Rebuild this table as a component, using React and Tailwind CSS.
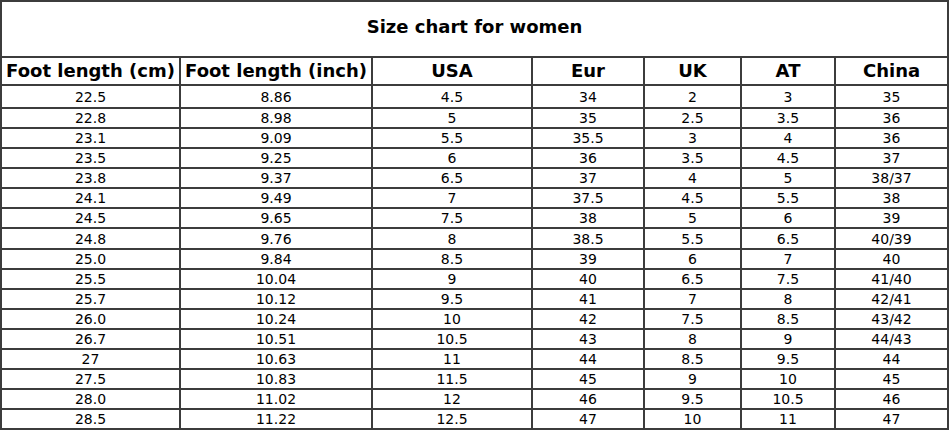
const columns = [
  { label: "Foot length (cm)", width: "w-[179px]" },
  { label: "Foot length (inch)", width: "w-[192px]" },
  { label: "USA", width: "w-[160px]" },
  { label: "Eur", width: "w-[112px]" },
  { label: "UK", width: "w-[97px]" },
  { label: "AT", width: "w-[94px]" },
  { label: "China", width: "w-[113px]" },
];

const rows = [
  ["22.5", "8.86", "4.5", "34", "2", "3", "35"],
  ["22.8", "8.98", "5", "35", "2.5", "3.5", "36"],
  ["23.1", "9.09", "5.5", "35.5", "3", "4", "36"],
  ["23.5", "9.25", "6", "36", "3.5", "4.5", "37"],
  ["23.8", "9.37", "6.5", "37", "4", "5", "38/37"],
  ["24.1", "9.49", "7", "37.5", "4.5", "5.5", "38"],
  ["24.5", "9.65", "7.5", "38", "5", "6", "39"],
  ["24.8", "9.76", "8", "38.5", "5.5", "6.5", "40/39"],
  ["25.0", "9.84", "8.5", "39", "6", "7", "40"],
  ["25.5", "10.04", "9", "40", "6.5", "7.5", "41/40"],
  ["25.7", "10.12", "9.5", "41", "7", "8", "42/41"],
  ["26.0", "10.24", "10", "42", "7.5", "8.5", "43/42"],
  ["26.7", "10.51", "10.5", "43", "8", "9", "44/43"],
  ["27", "10.63", "11", "44", "8.5", "9.5", "44"],
  ["27.5", "10.83", "11.5", "45", "9", "10", "45"],
  ["28.0", "11.02", "12", "46", "9.5", "10.5", "46"],
  ["28.5", "11.22", "12.5", "47", "10", "11", "47"],
];

export default function App() {
  return (
    <div className="w-[949px] h-[431px] bg-white overflow-hidden font-['DejaVu_Sans',Verdana,sans-serif] text-black">
      <table className="w-[947px] table-fixed border-collapse border-2 border-[#3c3c3c]">
        <colgroup>
          {columns.map((c) => (
            <col key={c.label} className={c.width} />
          ))}
        </colgroup>
        <tbody>
          {/* Title */}
          <tr className="h-[56px]">
            <td colSpan={7} className="border-2 border-[#3c3c3c] text-center align-middle text-[18px] font-bold pb-[5px]">
              Size chart for women
            </td>
          </tr>

          {/* Column headers */}
          <tr className="h-[28px]">
            {columns.map((c) => (
              <td
                key={c.label}
                className="border-2 border-[#3c3c3c] text-center align-middle text-[18px] font-bold leading-none whitespace-nowrap px-0 pb-[1px]"
              >
                {c.label}
              </td>
            ))}
          </tr>

          {/* Sizes */}
          {rows.map((r, i) => (
            <tr key={i} className={i === 0 ? "h-[23px]" : "h-[20.08px]"}>
              {r.map((v, j) => (
                <td
                  key={j}
                  className="border-2 border-[#3c3c3c] text-center align-middle text-[14px] leading-none p-0"
                >
                  {v}
                </td>
              ))}
            </tr>
          ))}
        </tbody>
      </table>
    </div>
  );
}
